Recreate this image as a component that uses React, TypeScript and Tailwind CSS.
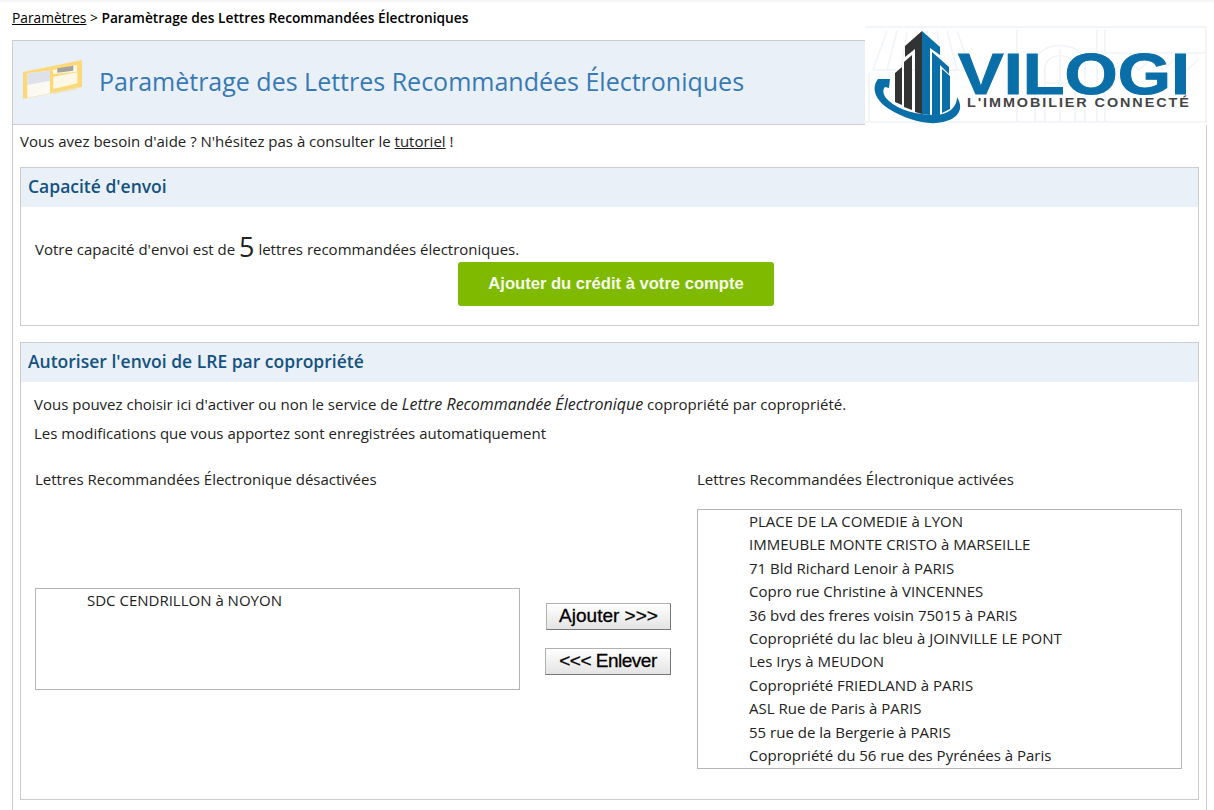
const activated = [
  "PLACE DE LA COMEDIE à LYON",
  "IMMEUBLE MONTE CRISTO à MARSEILLE",
  "71 Bld Richard Lenoir à PARIS",
  "Copro rue Christine à VINCENNES",
  "36 bvd des freres voisin 75015 à PARIS",
  "Copropriété du lac bleu à JOINVILLE LE PONT",
  "Les Irys à MEUDON",
  "Copropriété FRIEDLAND à PARIS",
  "ASL Rue de Paris à PARIS",
  "55 rue de la Bergerie à PARIS",
  "Copropriété du 56 rue des Pyrénées à Paris",
];

function FolderIcon() {
  return (
    <svg width="60" height="40" viewBox="0 0 60 40" className="mb-[5px] shrink-0">
      <polygon points="0,12 59,0 59,27 0,39" fill="#fbd97b" />
      <polygon points="4.3,13.3 27,10.7 27,33.3 4.3,37.7" fill="#fbfaf2" />
      <polygon points="4.3,13.3 27,10.7 27,20.7 4.3,25" fill="#dfe1ea" />
      <polygon points="30.3,16.7 54.3,12.3 54.3,23.3 30.3,29" fill="#fdf8e6" />
      <polygon points="30,10 54,5 54,11.7 30,14" fill="#fdf8e6" />
      <polygon points="34.3,8.3 50.3,5.7 50.3,10.7 34.3,12.7" fill="#a3a39b" />
      <polygon points="30.3,32.3 54.3,27.3 54.3,29.3 30.3,34.3" fill="#f0e4b8" />
    </svg>
  );
}

// faint sketch of a shop front behind the logo
function LogoSketch() {
  return (
    <svg width="349" height="100" viewBox="0 0 349 100" fill="none" stroke="#f0f3f8" strokeWidth="1.5" className="absolute left-0 top-0">
      <path d="M0 2 H342 M0 97 H342 M341 2 V97" />
      <path d="M8 45 L22 6 M22 45 L32 6 M36 45 L42 6 M50 45 L52 6 M64 45 L62 6 M78 45 L72 6 M92 45 L82 6 M106 45 L92 6" />
      <path d="M8 45 H108 M4 48 V97" />
      <path d="M170 97 V40 C170 14, 220 14, 220 40 V97 M180 97 V44 C180 26, 210 26, 210 44 V97 M195 24 V97 M180 58 H210" />
      <path d="M152 4 V97 M232 4 V97 M240 4 V97 M240 28 H341 M250 45 L262 34 L274 45 L286 34 L298 45 L310 34 L322 45 L334 34" />
    </svg>
  );
}

function Logo() {
  return (
    <div className="absolute left-[865px] top-[25px] h-[100px] w-[349px] bg-white">
      <LogoSketch />
      <svg width="110" height="108" viewBox="0 0 110 108" className="absolute left-0 top-[-3px]">
        <polygon points="57,9 57,92 50,90 50,27 40,35 40,24" fill="#333333" />
        <polygon points="47,33 47,88 39,85 39,40" fill="#333333" />
        <polygon points="37,45 37,83 30,80 30,51" fill="#333333" />
        <polygon points="57,9 75,25 75,33 65,26 65,93 57,92" fill="#0a6fa8" />
        <polygon points="67,30 84,45 84,52 75,43 75,93 67,94" fill="#0a6fa8" />
        <polygon points="77,47 85,54 85,87 77,91" fill="#0a6fa8" />
        <path d="M25 57 L13 57 C6 66 10 78 24 87 C40 97 62 104 78 100 C92 97 100 88 92 75 C92 86 82 93 70 93 C52 93 34 88 24 79 C18 74 17 68 20 65 L24 66 Z" fill="#0a6fa8" />
      </svg>
      <span className="absolute left-[93px] top-[28px] origin-left scale-x-[1.18] font-['Liberation_Sans',sans-serif] text-[58px] leading-[42px] font-bold text-[#0a6fa8] [-webkit-text-stroke:1px_#0a6fa8]">
        VILOGI
      </span>
      <span className="absolute left-[102px] top-[73px] origin-left scale-x-[1.2] font-['Liberation_Sans',sans-serif] text-[12px] leading-[10px] font-bold tracking-[1.6px] whitespace-nowrap text-[#444444]">
        L'IMMOBILIER CONNECTÉ
      </span>
    </div>
  );
}

function Section({ title, children }: { title: string; children: React.ReactNode }) {
  return (
    <section className="mx-[7px] border border-[#cccccc]">
      <h2 className="flex h-[39px] items-center bg-[#e9f0f7] pb-[2px] pl-[7px] text-[17.5px] font-semibold text-[#14527f]">{title}</h2>
      {children}
    </section>
  );
}

function ActionButton({ label, className }: { label: string; className: string }) {
  return (
    <button className={`h-[27px] border border-[#b0b0b0] border-r-[#777777] border-b-[#777777] bg-gradient-to-b from-white to-[#e4e4e4] pb-[2px] font-['Liberation_Sans',sans-serif] text-[19px] leading-none text-black [-webkit-text-stroke:0.3px_black] ${className}`}>
      {label}
    </button>
  );
}

export default function App() {
  return (
    <div className="relative h-[810px] w-[1214px] overflow-hidden bg-white font-['Open_Sans',sans-serif] text-[15px] text-[#222222]">
      <div className="h-[3px] bg-gradient-to-b from-[#f2f2f2] to-white" />
      <p className="pl-3 pt-[6px] text-[13.75px] leading-[18px] text-black">
        <a className="underline">Paramètres</a> &gt; <strong className="font-semibold">Paramètrage des Lettres Recommandées Électroniques</strong>
      </p>
      <main className="ml-3 mt-[13px] h-[780px] w-[1195px] border border-[#cccccc]">
        <header className="flex h-[84px] items-center gap-[16px] border-b border-[#cccccc] bg-[#e9f0f7] pl-[10px]">
          <FolderIcon />
          <h1 className="pb-[2px] text-[25px] text-[#3779b4]">Paramètrage des Lettres Recommandées Électroniques</h1>
        </header>
        <p className="mb-[15px] mt-[5px] pl-[7px] leading-[22px]">
          Vous avez besoin d'aide ? N'hésitez pas à consulter le <a className="underline">tutoriel</a> !
        </p>
        <Section title="Capacité d'envoi">
          <div className="h-[118px] pt-[24px]">
            <p className="h-[31px] pl-[14px] leading-[28px]">
              Votre capacité d'envoi est de <span className="inline-block translate-y-[2px] text-[27px] leading-none">5</span> lettres recommandées électroniques.
            </p>
            <button className="ml-[437px] h-[44px] w-[316px] rounded-[3px] bg-[#7fba00] font-['Liberation_Sans',sans-serif] text-[16.6px] font-bold text-[#f6faec]">
              Ajouter du crédit à votre compte
            </button>
          </div>
        </Section>
        <div className="h-4" />
        <Section title="Autoriser l'envoi de LRE par copropriété">
          <div className="h-[417px] pl-[13px] pt-[11px]">
            <p className="leading-[22px]">
              Vous pouvez choisir ici d'activer ou non le service de <em className="text-[16px]">Lettre Recommandée Électronique</em> copropriété par copropriété.
            </p>
            <p className="mt-[7px] leading-[22px]">Les modifications que vous apportez sont enregistrées automatiquement</p>
            <div className="mt-[24px] flex">
              <div className="ml-px w-[662px]">
                <p className="leading-[22px]">Lettres Recommandées Électronique désactivées</p>
                <div className="mt-[98px] h-[102px] w-[485px] border border-[#b5b5b5] pl-[51px] leading-[22px]">
                  SDC CENDRILLON à NOYON
                </div>
              </div>
              <div className="w-[484px]">
                <p className="leading-[22px]">Lettres Recommandées Électronique activées</p>
                <ul className="mt-[19px] h-[260px] w-[485px] border border-[#b5b5b5] pl-[51px]">
                  {activated.map((name) => (
                    <li key={name} className="h-[23.4px] leading-[23.4px]">{name}</li>
                  ))}
                </ul>
              </div>
              <div className="absolute left-[545px] top-[603px] flex w-[126px] flex-col items-end gap-[18px]">
                <ActionButton label="Ajouter >>>" className="w-[125px]" />
                <ActionButton label="<<< Enlever" className="w-[126px] tracking-[-0.5px]" />
              </div>
            </div>
          </div>
        </Section>
      </main>
      <Logo />
    </div>
  );
}
